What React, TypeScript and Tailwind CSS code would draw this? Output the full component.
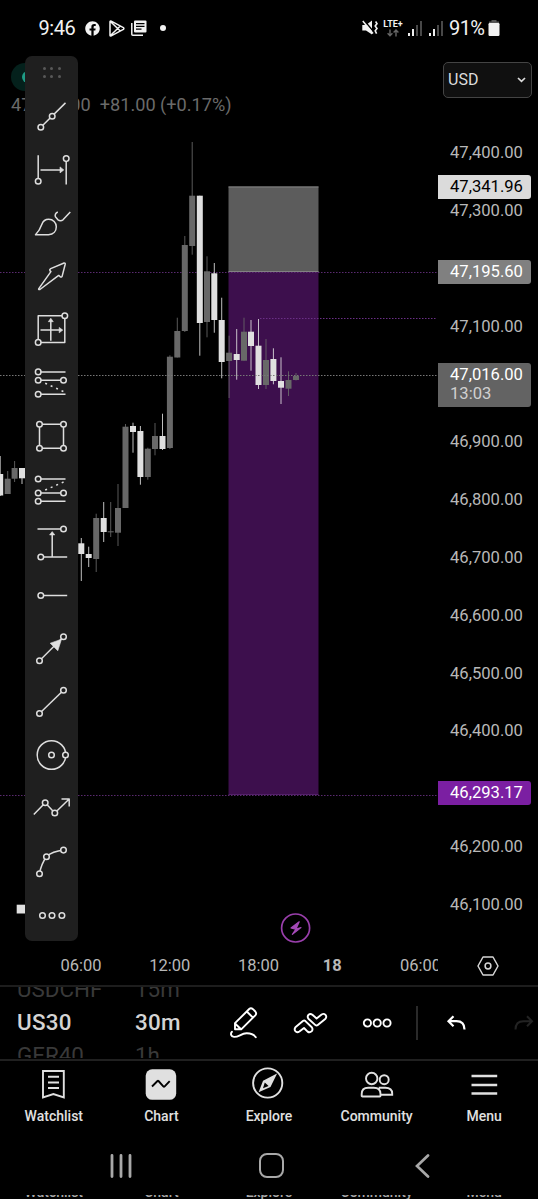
import type { ReactNode } from 'react';
import { FaFacebook } from 'react-icons/fa';

type Candle = [x: number, high: number, open: number, close: number, low: number, up: boolean];

// x, wick top, body top, body bottom, wick bottom, rising
const candles: Candle[] = [
  [0.2, 456, 474, 495.5, 496, false],
  [7.7, 471, 478.7, 494, 494, true],
  [14.6, 461, 468, 478.7, 482, true],
  [22, 468, 468, 478.3, 484, false],
  [81.3, 538, 543.3, 554, 581, false],
  [88.7, 546.7, 554, 558, 567, false],
  [96.2, 513.7, 518, 559, 572, true],
  [103.7, 502, 518, 532, 542, false],
  [110.7, 502, 531.3, 532.3, 537, true],
  [118, 484, 508, 532.7, 546, true],
  [125.5, 424, 426.7, 508, 508, true],
  [133, 422.7, 426, 432, 452.7, false],
  [140.4, 426, 431, 477, 484.7, false],
  [147.8, 447.7, 448.7, 477, 479.7, true],
  [155, 423, 436, 449, 455.3, true],
  [162.5, 413.7, 436, 449, 450, false],
  [169.9, 355.3, 356.7, 448, 449, true],
  [177.3, 317.7, 331, 357.5, 357.5, true],
  [184.8, 236, 245, 331, 332, true],
  [192.2, 142, 195.7, 246, 254.7, true],
  [199.8, 195.7, 195.7, 323, 355.7, false],
  [207, 256.3, 271.3, 322, 337.3, true],
  [214.3, 263, 273.3, 320, 332.7, false],
  [221.7, 297.7, 320, 362, 378.3, false],
  [229.1, 335.7, 352.7, 361, 398, true],
  [236.7, 329, 354, 360, 379.7, false],
  [244, 317.7, 331.7, 360.7, 360.7, true],
  [251, 320, 331.7, 346, 370.7, false],
  [258.5, 319, 345.7, 385, 389, false],
  [266, 339, 360, 385, 389, true],
  [273.4, 348.3, 359, 381, 384.3, false],
  [281, 357.3, 381, 387.7, 404, false],
  [288.5, 371.3, 380, 388.7, 396, true],
  [296, 373, 376, 380, 380.5, true],
];

const prices = [
  '47,400.00', '47,300.00', '', '47,100.00', '', '46,900.00', '46,800.00',
  '46,700.00', '46,600.00', '46,500.00', '46,400.00', '', '46,200.00', '46,100.00',
];

function Dot({ x, y, r = 2.8 }: { x: number; y: number; r?: number }) {
  return <circle cx={x} cy={y} r={r} className="fill-[#1f1f1f]" />;
}

const tools: ReactNode[] = [
  // trend line
  <><path d="M-10.7 11 14-13.3" /><Dot x={-10.7} y={11} /><Dot x={0.7} y={0} /></>,
  // date range
  <>
    <path d="M-13.3-14V12M14.7-10.6V15.4M-11 .7H10" />
    <path d="M8.5-2.3 12.3.7 8.5 3.7z" fill="currentColor" strokeWidth="0.6" />
    <Dot x={-13.3} y={12} /><Dot x={14.7} y={-10.6} />
  </>,
  // brush
  <>
    <path d="M-16 12.5H-3C2 12.3 4.8 9 4.8 4.6 4.8.5 1.6-3-2.8-3-6.5-3-8.6-.8-9.6 2-11 6-13 9.5-16 12.5z" />
    <path d="M6.3-10.2C4-9.2 3.2-7 3.9-5.4L6.2-2.6C8-1.2 10-1.2 11.5-2.4L18.8-10.2" />
  </>,
  // arrow
  <path d="M-12.7 12.4-.6-4.6-1.6-5.6Q-2.2-6.8-.8-7.6L12.6-13.2Q14-13.4 13.7-12L10.6.2Q9.8 1.4 8.8.6L7.2-.8-11.6 13.3Q-13.4 13.8-12.7 12.4z" />,
  // price and date range
  <>
    <path d="M-13.3-13.4H13.3V13.2H-13.3zM-.7-9V11.6M-11 .9H9" />
    <path d="M-3.2-7.5-.7-11 1.8-7.5zM7.7-1.8 11.3.9 7.7 3.6z" fill="currentColor" strokeWidth="0.6" />
    <Dot x={13.3} y={-13.4} /><Dot x={-13.3} y={13.2} />
  </>,
  // long position
  <>
    <path d="M-13.3-10.3H14M-13.3-2H12M-13.3 12H14" />
    <path d="M-6.3 1 12 9.4" strokeDasharray="2 4" />
    <Dot x={-13.3} y={-10.3} /><Dot x={-13.3} y={-2} /><Dot x={12} y={-2} /><Dot x={-13.3} y={12} />
  </>,
  // rectangle
  <>
    <path d="M-12-12H12V12H-12z" />
    <Dot x={-12} y={-12} /><Dot x={12} y={-12} /><Dot x={12} y={12} /><Dot x={-12} y={12} />
  </>,
  // short position
  <>
    <path d="M-13.3-10.2H14M-13.3 3.8H12M-13.3 12.1H14" />
    <path d="M-6.3.8 14-8" strokeDasharray="2 4" />
    <Dot x={-13.3} y={-10.2} /><Dot x={-13.3} y={3.8} /><Dot x={12} y={3.8} /><Dot x={-13.3} y={12.1} />
  </>,
  // price range
  <>
    <path d="M-14-13.2H12M-10.7 14.8H15.7M.7 14.8V-9" />
    <path d="M-1.9-7.3.7-10.6 3.3-7.3z" fill="currentColor" strokeWidth="0.6" />
    <Dot x={12} y={-13.2} /><Dot x={-10.7} y={14.8} />
  </>,
  // horizontal ray
  <><path d="M-10.7.3H15.7" /><Dot x={-10.7} y={0.3} /></>,
  // arrow line
  <>
    <path d="M-12 11.6 12-12.4" />
    <path d="M10-10-1.3-6 6.3 1.6z" fill="currentColor" strokeWidth="0.6" />
    <Dot x={-12} y={11.6} /><Dot x={12} y={-12.4} />
  </>,
  // segment
  <><path d="M-12 11.3 12-12" /><Dot x={-12} y={11.3} /><Dot x={12} y={-12} /></>,
  // circle
  <><circle cx="0" cy="-.2" r="14.3" /><Dot x={0} y={-0.2} /><Dot x={14} y={-0.2} /></>,
  // path
  <>
    <path d="M-17.7 6.2-6.3-5.5 3.3 4.8 17.7-9.2M10-9.2H17.7V-1.8" />
    <Dot x={-6.3} y={-5.5} /><Dot x={3.3} y={4.8} />
  </>,
  // arc
  <>
    <path d="M-12 11.5Q-10.5 2-5-5.5 1-10.8 12-12.1" />
    <Dot x={-12} y={11.5} /><Dot x={-5} y={-5.5} /><Dot x={12} y={-12.1} />
  </>,
  // more
  <><Dot x={-9} y={0.3} /><Dot x={0.5} y={0.3} /><Dot x={10.4} y={0.3} /></>,
];

function Signal({ className }: { className: string }) {
  return (
    <svg className={className} width="14" height="15" viewBox="0 0 14 15">
      <rect x="0" y="12" width="2" height="3" fill="#eee" />
      <rect x="4" y="8" width="2" height="7" fill="#eee" />
      <rect x="8" y="4" width="2" height="11" fill="#484848" />
      <rect x="12" y="0" width="2" height="15" fill="#484848" />
    </svg>
  );
}

function StatusBar() {
  return (
    <header className="flex h-14 shrink-0 items-center pl-[38.5px] text-[#f2f2f2]">
      <span className="w-[46px] text-[20px] leading-none tracking-[-0.4px]">9:46</span>
      <FaFacebook className="size-[15px]" />
      <svg className="ml-[9.5px]" width="16" height="17" viewBox="0 0 16 17" fill="none" stroke="currentColor" strokeWidth="1.5" strokeLinejoin="round">
        <path d="M1 1.8V15.2Q1 16.4 2.2 15.8L14.4 9.3Q15.4 8.5 14.4 7.7L2.2 1.2Q1 .6 1 1.8zM1.4 1.5 11.3 11M1.4 15.5 11.3 6" />
      </svg>
      <svg className="ml-[6px]" width="16" height="16" viewBox="0 0 16 16">
        <path d="M.8 3V14.2Q.8 15.2 1.8 15.2H12" fill="none" stroke="currentColor" strokeWidth="1.5" />
        <rect x="3" y="0.5" width="12.5" height="12" rx="1" fill="currentColor" />
        <path d="M5 3.7H13.5M5 6.4H13.5M5 9.1H10.5" stroke="#000" strokeWidth="1.2" />
      </svg>
      <span className="ml-[13px] size-[6px] rounded-full bg-[#f2f2f2]" />
      <svg className="ml-[196px]" width="16" height="16" viewBox="0 0 16 16">
        <path d="M.3 5H4L10 .5V14.5L4 10.5H.3z" fill="currentColor" />
        <path d="M2 .2 12 12.2" stroke="#000" strokeWidth="1.5" />
        <path d="M.8 1 11 13.4" stroke="currentColor" strokeWidth="1.5" />
        <path d="M13.6 1.5 15 3.6 13.2 6 15 8.4 13.2 10.8 14.6 13.6" fill="none" stroke="currentColor" strokeWidth="1.6" />
      </svg>
      <div className="ml-[5px] flex w-5 flex-col items-center">
        <span className="text-[9px] leading-[9px] font-bold">LTE+</span>
        <svg width="12" height="8" viewBox="0 0 12 8" fill="none" stroke="#666" strokeWidth="1.4">
          <path d="M3 .5V6.5M.6 4.2 3 6.7 5.4 4.2M9 7.5V1.2M6.6 3.6 9 1.1 11.4 3.6" />
        </svg>
      </div>
      <Signal className="ml-[5px]" />
      <Signal className="ml-[7px]" />
      <span className="ml-[6px] w-[39px] text-[20px] leading-none tracking-[-0.6px]">91%</span>
      <svg width="12" height="16" viewBox="0 0 12 16">
        <path d="M3.5 0H8.5V1.5H11V4H1V1.5H3.5z" fill="#555" />
        <rect x="0.5" y="3" width="11" height="13" rx="1.2" fill="#f2f2f2" />
      </svg>
    </header>
  );
}

function Plot() {
  return (
    <svg className="block shrink-0" width="438" height="890" viewBox="0 56 438 890">
      <rect x="228.5" y="186.5" width="90" height="85.5" fill="#5c5c5c" />
      <rect x="228.5" y="272" width="90" height="522.5" fill="#3d0f4d" />
      <path d="M228.5 187H318.5M228.5 271.5H318.5" stroke="#828282" />
      <path d="M228.5 794.5H318.5" stroke="#54206a" />
      <g strokeDasharray="1.5 1.5" strokeWidth="1">
        <path d="M0 272.5H438M0 795.5H438" stroke="#5a2a70" />
        <path d="M260 318.5H436" stroke="#6b2f86" />
      </g>
      {candles.map(([x, high, top, bottom, low, up]) => (
        <g key={x} fill={up ? '#686868' : '#e0e0e0'}>
          <rect x={x - 0.5} y={high} width="1" height={low - high} opacity="0.85" />
          <rect x={x - 3} y={top} width="6" height={bottom - top} />
        </g>
      ))}
      <path d="M0 375.5H438" stroke="#777" strokeDasharray="1.5 1.5" />
      <rect x="16.7" y="904.7" width="9" height="8.8" fill="#e0e0e0" />
      <circle cx="25" cy="77" r="14" fill="#04211c" />
      <circle cx="28" cy="77" r="6" fill="#1f9c86" />
      <circle cx="295.6" cy="928" r="14" fill="none" stroke="#9a3fac" strokeWidth="1.7" />
      <path d="M299.2 921.8 291 928 294.6 928.8H297L301 927.6 292.4 934.4 296 929z" fill="#a54ab8" stroke="#a54ab8" strokeWidth="1.2" strokeLinejoin="round" />
    </svg>
  );
}

function PriceAxis() {
  return (
    <div className="relative flex-1 pt-[6px] text-[16.6px] text-[#b8b8b8]">
      <div className="ml-[5px] flex h-[36px] w-[89px] items-center justify-between rounded-[5px] border border-[#444] bg-[#101010] pr-[5px] pb-px pl-[4px] text-[16px] text-[#dcdcdc]">
        USD
        <svg width="9" height="6" viewBox="0 0 9 6" fill="none" stroke="currentColor" strokeWidth="1.7">
          <path d="M1 1 4.5 4.3 8 1" />
        </svg>
      </div>
      <div className="mt-[26.1px] flex flex-col pl-[12px]">
        {prices.map((price, i) => (
          <span key={i} className="h-[57.83px] leading-[57.83px]">{price}</span>
        ))}
      </div>
      <div className="absolute top-[119px] left-0 h-6 w-[93px] rounded-r-[3px] bg-[#dbdbdb] pl-[12px] leading-[23px] text-black">47,341.96</div>
      <div className="absolute top-[204px] left-0 h-6 w-[93px] rounded-r-[3px] bg-[#808080] pl-[12px] leading-[23px] text-white">47,195.60</div>
      <div className="absolute top-[307px] left-0 h-[44px] w-[93px] rounded-r-[3px] bg-[#636363] pt-px pl-[12px] leading-[21px] text-white">
        47,016.00
        <div className="leading-[18px] text-[#d0d0d0]">13:03</div>
      </div>
      <div className="absolute top-[725px] left-0 h-6 w-[93px] rounded-r-[3px] bg-[#7b1fa2] pl-[12px] leading-[23px] text-white">46,293.17</div>
    </div>
  );
}

function Toolbar() {
  return (
    <div className="absolute top-0 left-[25px] flex h-[885px] w-[53px] flex-col items-center rounded-[7px] bg-[#1f1f1f] text-[#dedede]">
      <div className="flex h-[33.3px] shrink-0 items-center">
        <div className="grid grid-cols-3 gap-x-[4.5px] gap-y-[5px]">
          {[0, 1, 2, 3, 4, 5].map((i) => (
            <span key={i} className="size-[3px] rounded-full bg-[#585858]" />
          ))}
        </div>
      </div>
      {tools.map((tool, i) => (
        <button key={i} className="flex h-[53.27px] shrink-0 items-center justify-center">
          <svg width="40" height="40" viewBox="-19.5 -20.2 40 40" fill="none" stroke="currentColor" strokeWidth="1.5" strokeLinejoin="round">
            {tool}
          </svg>
        </button>
      ))}
    </div>
  );
}

function TimeAxis() {
  return (
    <div className="flex h-[41px] shrink-0 items-center border-b-2 border-[#1d1d1d] text-center text-[16.5px] text-[#b8b8b8]">
      <div className="flex w-[437.5px] overflow-hidden pt-px pl-[36.6px]">
        <span className="w-[88.8px] shrink-0">06:00</span>
        <span className="w-[88.8px] shrink-0">12:00</span>
        <span className="w-[88.8px] shrink-0">18:00</span>
        <span className="w-[58.6px] shrink-0 font-bold">18</span>
        <span className="w-[118px] shrink-0">06:00</span>
      </div>
      <svg className="ml-[39.5px]" width="22" height="20" viewBox="0 0 22 20" fill="none" stroke="#d6d6d6" strokeWidth="1.5" strokeLinejoin="round">
        <path d="M6 1H16L21 10 16 19H6L1 10z" />
        <circle cx="11" cy="10" r="2.9" />
      </svg>
    </div>
  );
}

function Wheel({ items, className }: { items: string[]; className: string }) {
  return (
    <div className={`flex h-full flex-col items-center justify-center overflow-hidden text-[22.4px] leading-[33px] ${className}`}>
      {items.map((item, i) => (
        <span key={item} className={i === 1 ? 'w-full font-medium tracking-[0.3px] text-[#d4d4d4]' : 'w-full text-[#393939]'}>
          {item}
        </span>
      ))}
    </div>
  );
}

function SymbolBar() {
  return (
    <div className="flex h-[74px] shrink-0 items-center overflow-hidden border-b-2 border-[#202020] pb-px text-white">
      <Wheel items={['USDCHF', 'US30', 'GER40']} className="w-[120px] shrink-0 pl-[17px]" />
      <Wheel items={['15m', '30m', '1h']} className="w-[109px] shrink-0 pl-[15px]" />
      <svg className="shrink-0" width="30" height="34" viewBox="229 1005.5 30 34" fill="none" stroke="currentColor" strokeWidth="1.9" strokeLinejoin="round" strokeLinecap="round">
        <path d="M235 1022.7 249.2 1008.5Q251 1007 253 1008.7L255.3 1011Q257 1013 255.3 1014.8L241.2 1028.8H235zM246.8 1011 253 1017.2M235 1023 241 1028.8" />
        <path d="M232 1031.3C230.2 1033 230.8 1036 234 1036.4 238.5 1036.8 241 1033 246.5 1032.8 251 1032.7 254 1034 255.8 1036.8" />
      </svg>
      <svg className="ml-[34px] shrink-0" width="36" height="24" viewBox="292.8 1010.3 36 24" fill="none" stroke="currentColor" strokeWidth="1.9" strokeLinejoin="round">
        <path d="M295.2 1026.6 302.7 1020.4Q304 1019.4 305.2 1020.4L311.6 1026.6Q313 1028.4 311.6 1030.4 309.6 1032.4 307.4 1030.9L303.8 1027.3 299.2 1030.8Q296.8 1032.3 295.1 1030.4 293.8 1028.4 295.2 1026.6z" />
        <path d="M312.2 1014Q310 1012.4 308.2 1014.2 306.8 1016.2 308.2 1018L315.2 1024.4Q316.4 1025.4 317.6 1024.4L325.3 1018Q326.8 1016 325.3 1014.2 323.6 1012.4 321.4 1013.8L316.4 1017.8z" />
      </svg>
      <svg className="ml-[33px] shrink-0" width="30" height="12" viewBox="0 0 30 12" fill="none" stroke="currentColor" strokeWidth="1.9">
        <circle cx="5.4" cy="6" r="3.6" />
        <circle cx="15.2" cy="6" r="3.6" />
        <circle cx="25" cy="6" r="3.6" />
      </svg>
      <span className="ml-[24px] h-[34px] w-[1.5px] shrink-0 bg-[#2a2a2a]" />
      <svg className="ml-[28.5px] shrink-0" width="20" height="16" viewBox="0 0 20 16" fill="none" stroke="currentColor" strokeWidth="2.2">
        <path d="M7.5 1.2 2.5 6.2 7.5 11.2M2.5 6.2H10.5Q18.5 6.2 18.5 14.6" />
      </svg>
      <svg className="ml-[48px] shrink-0" width="20" height="16" viewBox="0 0 20 16" fill="none" stroke="#232323" strokeWidth="2">
        <path d="M13 1.2 18 6.2 13 11.2M18 6.2H9.5Q1.5 6.2 1.5 14.6" />
      </svg>
    </div>
  );
}

const tabs: { label: string; icon: ReactNode }[] = [
  { label: 'Watchlist', icon: <path d="M6 4H26.8V30.5L16.4 27 6 30.5zM11 9.7H22M11 15.5H22M11 21H22" /> },
  {
    label: 'Chart',
    icon: (
      <>
        <rect x="1.7" y="2.3" width="30.5" height="30.5" rx="6.5" fill="currentColor" stroke="none" />
        <path d="M8 19.5 13.5 14Q14 13.5 14.5 14L19.3 19.3Q20 20 20.7 19.3L25.7 14.2" stroke="#000" />
      </>
    ),
  },
  {
    label: 'Explore',
    icon: (
      <>
        <circle cx="15.7" cy="16" r="14.6" />
        <path d="M23 8.6 11.8 14.4 8.3 23.4 17.8 19.2z" fill="currentColor" />
        <path d="M12.8 15.6 16.6 19 11 21.2z" fill="#000" stroke="none" />
      </>
    ),
  },
  {
    label: 'Community',
    icon: (
      <>
        <circle cx="11.7" cy="11.5" r="5.7" />
        <circle cx="24.2" cy="12.7" r="4.5" />
        <path d="M1.7 28.8V27Q1.7 20.7 8.2 20.7H13.7Q20.5 20.7 20.5 27V28.8Q20.5 29.5 19.7 29.5H2.5Q1.7 29.5 1.7 28.8zM18.7 20.7H25.2Q32.2 20.7 32.2 26.5V27.7H20.7" />
      </>
    ),
  },
  { label: 'Menu', icon: <path d="M4.5 9H30.2M4.5 18H30.2M4.5 26.5H30.2" strokeWidth="2.4" /> },
];

export default function App() {
  return (
    <div className="flex h-[1199px] w-[538px] flex-col overflow-hidden bg-black font-['Roboto',sans-serif]">
      <StatusBar />

      {/* Chart */}
      <main className="relative flex h-[890px] shrink-0">
        <Plot />
        <PriceAxis />
        <div className="absolute top-[35px] left-[11px] text-[18.15px] whitespace-pre text-[#6a6a6a]">
          47,016.00  +81.00 (+0.17%)
        </div>
        <Toolbar />
      </main>
      <TimeAxis />
      <SymbolBar />

      {/* Tabs */}
      <nav className="grid h-[66px] shrink-0 grid-cols-5 pt-[6px] text-[#e0e0e0]">
        {tabs.map(({ label, icon }) => (
          <button key={label} className="flex flex-col items-center">
            <svg width="34" height="34" viewBox="0 0 34 34" fill="none" stroke="currentColor" strokeWidth="1.9" className="shrink-0">
              {icon}
            </svg>
            <span className="mt-[5px] text-[14px] leading-5 font-medium">{label}</span>
          </button>
        ))}
      </nav>

      {/* System navigation */}
      <div className="flex h-[68px] shrink-0 items-center pt-[9px] pl-[110px]">
        <svg width="22" height="24" viewBox="0 0 22 24" stroke="#a8a8a8" strokeWidth="2.8" strokeLinecap="round">
          <path d="M2 1.5V22.5M11 1.5V22.5M20 1.5V22.5" />
        </svg>
        <span className="ml-[127px] size-[25px] rounded-[8px] border-[2.5px] border-[#a8a8a8]" />
        <svg className="ml-[131px]" width="15" height="24" viewBox="0 0 15 24" fill="none" stroke="#a8a8a8" strokeWidth="2.7" strokeLinecap="round">
          <path d="M13 1.5 2 12 13 22.5" />
        </svg>
      </div>
      <div className="grid h-[4px] shrink-0 grid-cols-5 overflow-hidden text-center text-[14px] leading-5 font-medium text-[#a8a8a8]">
        {tabs.map(({ label }) => (
          <span key={label} className="-mt-[13.5px]">{label}</span>
        ))}
      </div>
    </div>
  );
}
